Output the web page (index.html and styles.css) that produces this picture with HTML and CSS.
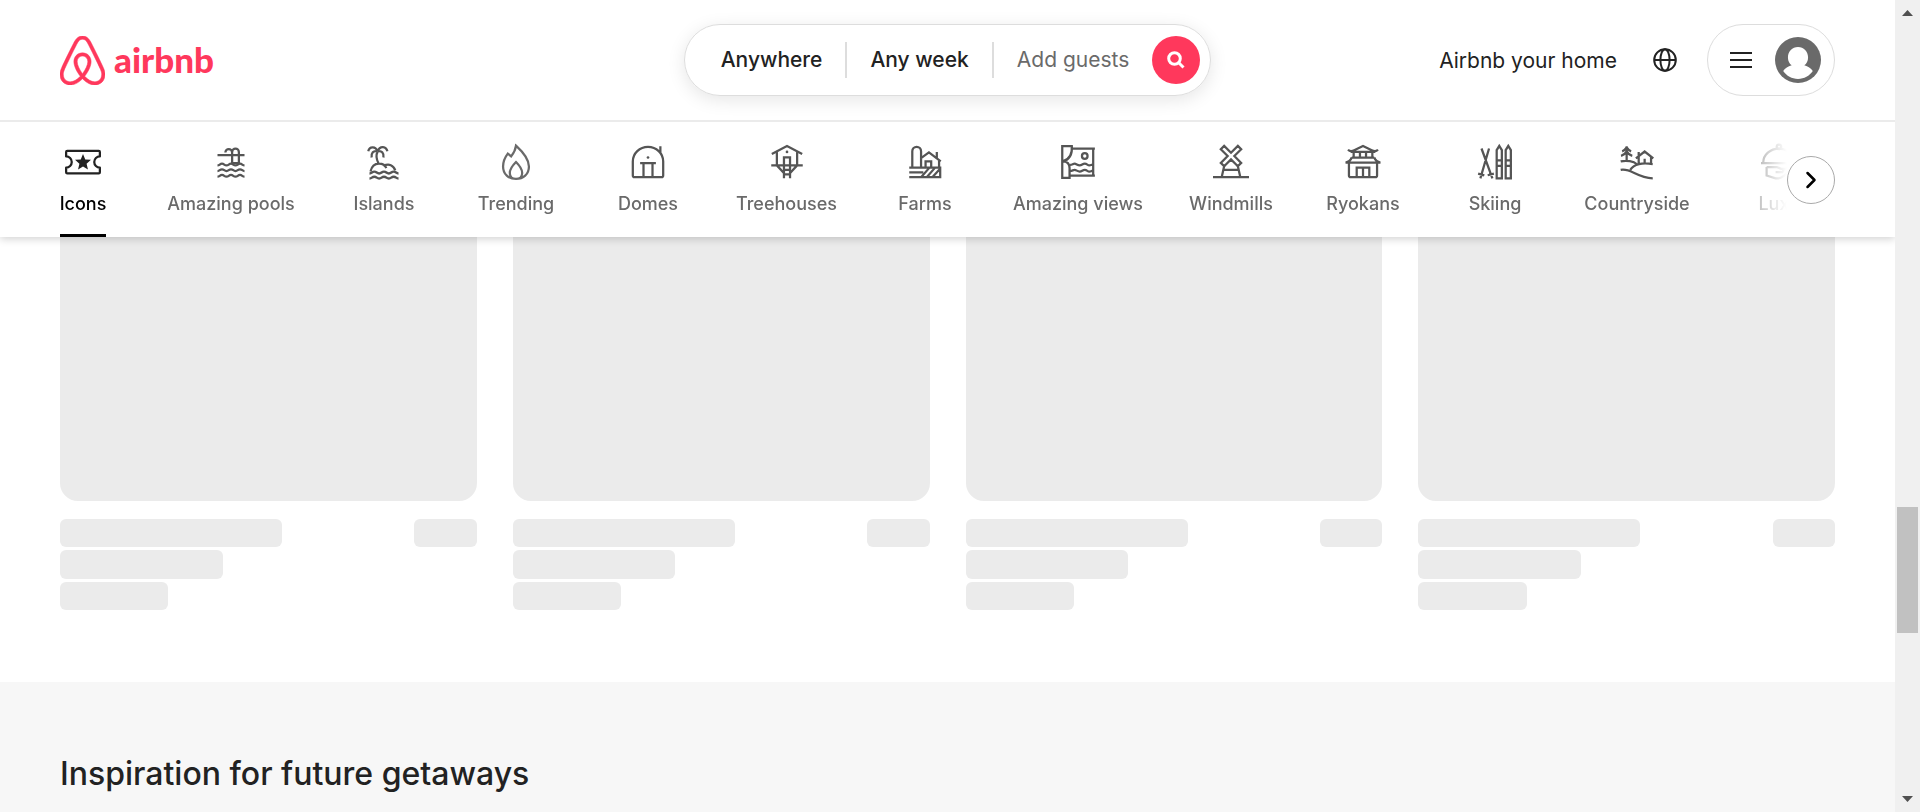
FILE: index.html
```html
<!DOCTYPE html>
<html lang="en">
<head>
<meta charset="utf-8">
<title>Airbnb</title>
<link rel="stylesheet" href="styles.css">
</head>
<body>
<svg class="defs" aria-hidden="true">
  <symbol id="wave" viewBox="0 0 24 4" overflow="visible"><path d="M0 2.5c2 0 2-1.5 4-1.5s2 1.5 4 1.5 2-1.5 4-1.5 2 1.5 4 1.5 2-1.5 4-1.5 2 1.5 4 1.5"/></symbol>
</svg>
<div class="window">
  <div class="page">
    <header class="site-header">
      <div class="topbar">
        <a class="logo" href="#" aria-label="Airbnb homepage">
          <svg class="logo-mark" viewBox="2.5 1 27 30" preserveAspectRatio="none" aria-hidden="true"><path d="M16 1c2.008 0 3.463.963 4.751 3.269l.533 1.025c1.954 3.83 6.114 12.54 7.1 14.836l.145.353c.667 1.591.91 2.472.96 3.396l.011.415.001.228c0 4.062-2.877 6.478-6.357 6.478-2.224 0-4.556-1.258-6.709-3.386l-.257-.26-.172-.179h-.011l-.176.185c-2.044 2.1-4.267 3.42-6.414 3.615l-.28.019-.267.006C5.377 31 2.5 28.584 2.5 24.522l.005-.469c.026-.928.23-1.768.83-3.244l.216-.524c.966-2.298 6.083-12.989 7.707-16.034C12.537 1.963 13.992 1 16 1zm0 2c-1.239 0-2.053.539-2.987 2.21l-.523 1.008c-1.926 3.776-6.06 12.43-7.031 14.692l-.345.836c-.427 1.071-.573 1.655-.605 2.24l-.009.33v.206C4.5 27.395 6.411 29 8.857 29c1.773 0 3.87-1.236 5.831-3.354-2.295-2.938-3.855-6.45-3.855-8.91 0-2.913 1.933-5.386 5.178-5.42 3.223.034 5.156 2.507 5.156 5.42 0 2.456-1.555 5.96-3.855 8.907C19.277 27.766 21.37 29 23.142 29c2.447 0 4.358-1.605 4.358-4.478l-.004-.411c-.019-.672-.17-1.296-.714-2.62l-.248-.6c-1.065-2.478-5.993-12.768-7.538-15.664C18.053 3.539 17.24 3 16 3zm.01 10.316c-2.01.021-3.177 1.514-3.177 3.42 0 1.797 1.18 4.58 2.955 7.044l.21.287.174-.234c1.73-2.385 2.898-5.066 2.989-6.875l.006-.221c0-1.906-1.167-3.4-3.156-3.421z"/></svg>
          <span class="logo-word">airbnb</span>
        </a>
        <div class="search">
          <button class="search-part">Anywhere</button>
          <button class="search-part divided">Any week</button>
          <button class="search-part divided guests">Add guests</button>
          <button class="search-go" aria-label="Search"><svg viewBox="0 0 18 18" aria-hidden="true"><circle cx="7.5" cy="7.5" r="5.8"/><path d="M11.8 11.8 16.5 16.5"/></svg></button>
        </div>
        <nav class="user-nav">
          <a class="host-link" href="#">Airbnb your home</a>
          <button class="globe" aria-label="Choose a language"><svg viewBox="0 0 24 24" aria-hidden="true"><circle cx="12" cy="12" r="10.8"/><ellipse cx="12" cy="12" rx="4.6" ry="10.8"/><path d="M1 12h22"/></svg></button>
          <button class="menu" aria-label="Main menu">
            <svg class="bars" viewBox="0 0 24 24" aria-hidden="true"><path d="M1 5h22M1 12h22M1 19h22"/></svg>
            <svg class="avatar" viewBox="0 0 32 32" aria-hidden="true"><circle cx="16" cy="16" r="16" fill="#6a6a6a"/><path fill="#fff" d="M16 7c4 0 7 3 7 7.200 0 2.400-1 4.300-2.600 5.500 2.600.7 4.500 2.100 5.900 4-2.400 3.400-6 5.500-10.300 5.500s-7.900-2.100-10.300-5.500c1.400-1.900 3.300-3.300 5.900-4C10 18.500 9 16.600 9 14.200 9 10 12 7 16 7z"/></svg>
          </button>
        </nav>
      </div>
      <div class="categories">
        <div class="category-list">
          <button class="category active"><svg viewBox="0 0 32 32"><path stroke-linejoin="round" d="M2 6h28q1 0 1 1v4a5 5 0 0 0 0 10v4q0 1-1 1H2q-1 0-1-1v-4a5 5 0 0 0 0-10V7q0-1 1-1z"/><path class="solid" d="m16 8.800 2 4.900 5.100.4-3.900 3.400 1.200 5.200-4.400-2.800-4.400 2.800 1.200-5.200-3.900-3.400 5.100-.4z"/></svg><span>Icons</span></button>
          <button class="category long"><svg viewBox="0 0 32 32"><path d="M4 9.800h24M11 7.500a3 3 0 0 1 6 0V18M17 7a3 3 0 0 1 6 0v11M17 17h6"/><use href="#wave" x="4" y="16.500" width="24" height="4"/><use href="#wave" x="4" y="21.500" width="24" height="4"/><use href="#wave" x="4" y="26.500" width="24" height="4"/></svg><span>Amazing pools</span></button>
          <button class="category"><svg viewBox="0 0 32 32"><path d="M10.200 7c-1.500 3-.8 7 1 10.500M10.200 6.500C8.500 1.500 3 2 2 6.500M10.200 6.500C6.500 5.500 4.500 8 5 12M10.200 6.500C12.500 1 18 2 19 6.500M10.200 6.500c3.800-1 5.800 1.500 5.300 5.500M4 24.500c1-4.500 3.500-7 7.500-7 3 0 5.500 1 6.500 4M15.500 19.500c5-2.500 9-.5 10.500 4"/><use href="#wave" x="3" y="23.500" width="26" height="4.300"/><use href="#wave" x="3" y="28" width="26" height="4.300"/></svg><span>Islands</span></button>
          <button class="category"><svg viewBox="0 0 32 32"><path class="light" d="M16 1.500C22 7 27.500 13 27.500 20S22.500 31 16 31 4.500 27 4.500 20c0-4 1.500-8 4.200-11.500l3 2.500C13.700 8.500 15.500 5.500 16 1.500zM16 16c-3 3-5.500 6-5.500 9.700C10.500 29 12.800 31 16 31s5.500-2 5.500-5.300c0-3.700-2.500-6.700-5.500-9.700z"/></svg><span>Trending</span></button>
          <button class="category"><svg viewBox="0 0 32 32"><path d="M2.500 15.500a13.500 13 0 0 1 27 0V28q0 1.500-1.500 1.500H4q-1.500 0-1.500-1.500zM27 2v6.500M9 17h14M12 17v12.500M20 17v12.500"/><circle class="solid" cx="16" cy="12" r="1.200"/></svg><span>Domes</span></button>
          <button class="category medium"><svg viewBox="0 0 32 32"><path d="M2.500 8.800 16 1.800l13.500 7M7 7v12M25 7v12M2 19h28M13.300 30.500V11.800h5.400v18.700M7 19l6 6.500M25 19l-6 6.500M13.300 23h5.400M13.300 27h5.400"/><circle class="solid" cx="16" cy="7" r="1.200"/></svg><span>Treehouses</span></button>
          <button class="category"><svg viewBox="0 0 32 32"><path d="M4.700 21V6.500a3.900 4 0 0 1 7.800 0V21M12.500 12.500 19.500 7.500l10.500 8M26.500 7v5.500M28.500 14.500V21M16.500 21v-5.500h5V21M2 21h27.500v8.500H2M2 25.200h12.500M12.500 29.500 20 21M17.500 29.500 25 21M22.500 29.500l6.500-7"/></svg><span>Farms</span></button>
          <button class="category long"><svg viewBox="0 0 32 32"><path d="M2 1.800h8.500C11 8 9.500 13.500 2.500 15.500c4 0 6 2.500 6 6v8.700H2zM10.500 4H31M29.500 4v24M8.500 28H31M9 18.500c2 0 2.500-1 4-1s2.500 1.500 4.500 1.500 2.500-1.500 4.500-1.500 2.500 1.500 4 1.500 2.500-1 3.500-1M9 24c2 0 2.500-1 4-1s2.500 1.500 4.500 1.500S20 23 22 23s2.500 1.500 4 1.500 2.500-1 3.500-1"/><circle cx="22" cy="10.700" r="2.500"/></svg><span>Amazing views</span></button>
          <button class="category"><svg viewBox="0 0 32 32"><path transform="rotate(45 16 10.700)" d="M13.900 0h4.200v8.600h8.600v4.200h-8.600v8.600h-4.200v-8.600H5.300V8.600h8.600z"/><path d="M0 29.500h32M7.700 29.500l2.500-11M24.300 29.500l-2.500-11M9.200 23h13.600"/></svg><span>Windmills</span></button>
          <button class="category"><svg viewBox="0 0 32 32"><path d="M2.700 5c1.500 1.800 3.500 1.500 5.500.5L16 1.800l7.800 3.700c2 1 4 1.300 5.500-.5M5 7h22M7.700 7v5M24.300 7v5M13.300 7v5M18.700 7v5M6 12h20M6 12c-1 2.500-2.500 4-5.500 4.500h31C28.500 16 27 14.500 26 12M3.500 17v11q0 1.500 1.500 1.500h22q1.500 0 1.500-1.500V17M10.400 29.500V21h11.200v8.500M16 21v8.500"/></svg><span>Ryokans</span></button>
          <button class="category"><svg viewBox="0 0 32 32"><path d="M4 4l9.700 26.500M10.700 4 3 30.500M1 26.300l5.500 1.600M9.500 27.800l5.500-1.500M17.500 30.500V5.500l2.300-3.800 2.300 3.800v25zM17.500 14.500h4.600M17.500 19.500h4.600M25.500 30.500V5.500l2.300-3.800 2.300 3.800v25zM25.500 14.500h4.600M25.500 19.500h4.600"/></svg><span>Skiing</span></button>
          <button class="category wide"><svg viewBox="0 0 32 32"><path d="M6.800 2v13M6.800 3c-1 1.500-2.500 3-4 3.500M6.800 3c1 1.500 2.500 3 4 3.500M6.800 6.500c-1 2-3 3.500-5 4M6.800 6.500c1 2 3 3.500 5 4M1.500 15.500C7 14 13 15.500 16 18M15 12.700l7.800-6 7.700 6M17.500 11V17M17.500 7v4M28.500 11.500V17M22.800 13v4.500M10 23c3-5 11-7 20-5M1.500 23c9-2 14 7 28.500 7.500"/></svg><span>Countryside</span></button>
          <button class="category"><svg viewBox="0 0 32 32"><path d="M2 16.500a14 12.500 0 0 1 28 0M0 17h32M5 20.500v7.500l8 2.500c3 .5 5-.5 7-2l6-4.500M5 20.500h9l4 1.500h6M13 25h6q2-1.500 0-3"/><circle cx="16" cy="2.500" r="2"/></svg><span>Luxe</span></button>
        </div>
        <button class="next" aria-label="Next categories"><svg viewBox="0 0 18 18" aria-hidden="true"><path d="m5.500 2 7 7-7 7"/></svg></button>
      </div>
    </header>
    <main class="listings">
      <div class="card"><div class="photo"></div><div class="row"><i class="bar title"></i><i class="bar rating"></i></div><i class="bar sub"></i><i class="bar price"></i></div>
      <div class="card"><div class="photo"></div><div class="row"><i class="bar title"></i><i class="bar rating"></i></div><i class="bar sub"></i><i class="bar price"></i></div>
      <div class="card"><div class="photo"></div><div class="row"><i class="bar title"></i><i class="bar rating"></i></div><i class="bar sub"></i><i class="bar price"></i></div>
      <div class="card"><div class="photo"></div><div class="row"><i class="bar title"></i><i class="bar rating"></i></div><i class="bar sub"></i><i class="bar price"></i></div>
    </main>
    <section class="inspiration"><h2>Inspiration for future getaways</h2></section>
  </div>
  <div class="scrollbar" aria-hidden="true">
    <svg class="arrow" viewBox="0 0 11 6"><path d="M5.500 0 11 6H0z"/></svg>
    <div class="track"><div class="thumb"></div></div>
    <svg class="arrow" viewBox="0 0 11 6"><path d="M0 0h11L5.500 6z"/></svg>
  </div>
</div>
</body>
</html>
```
FILE: styles.css
```css
* { box-sizing: border-box; }
body { margin: 0; background: #fff; color: #222; font-family: Inter, Roboto, sans-serif; }
button { border: 0; padding: 0; background: none; font: inherit; color: inherit; cursor: pointer; }
a { color: inherit; text-decoration: none; }
svg { display: block; flex: none; }
.defs { position: absolute; width: 0; height: 0; }
.window { display: grid; grid-template-columns: minmax(0, 1fr) 25px; height: 100vh; overflow: hidden; }
.page { display: flex; flex-direction: column; overflow: hidden; }

.site-header { position: relative; z-index: 1; flex: none; background: #fff; box-shadow: 0 2px 8px rgba(0, 0, 0, .18); }
.topbar { display: grid; grid-template-columns: 1fr auto 1fr; align-items: center; height: 122px; padding: 0 60px; border-bottom: 2px solid #ebebeb; }
.logo { display: flex; align-items: center; gap: 9px; color: #ff385c; justify-self: start; }
.logo-mark { width: 45px; height: 49px; fill: currentColor; stroke: currentColor; stroke-width: .3; }
.logo-word { padding-bottom: 3px; font: 900 35px/48px Lato, sans-serif; }
.search { display: flex; align-items: center; height: 72px; padding: 0 10px 0 13px; border: 1px solid #ddd; border-radius: 36px; box-shadow: 0 4px 18px rgba(0, 0, 0, .1); font-size: 21px; line-height: 36px; font-weight: 500; }
.search-part { padding: 0 23px; }
.search-part.divided { border-left: 2px solid #ddd; }
.search-part.guests { color: #6a6a6a; font-weight: 400; }
.search-go { display: grid; place-items: center; width: 48px; height: 48px; border-radius: 50%; background: #ff385c; }
.search-go svg { width: 18px; height: 18px; fill: none; stroke: #fff; stroke-width: 3; }
.user-nav { display: flex; align-items: center; justify-self: end; font-size: 21px; }
.host-link { margin-right: 36px; }
.globe { margin-right: 30px; }
.globe svg { width: 24px; height: 24px; fill: none; stroke: #222; stroke-width: 2; }
.menu { display: flex; align-items: center; gap: 22px; height: 72px; padding: 0 13px 0 21px; border: 1px solid #ddd; border-radius: 36px; }
.bars { width: 24px; height: 24px; fill: none; stroke: #222; stroke-width: 2; }
.avatar { width: 46px; height: 46px; }

.categories { position: relative; display: flex; align-items: center; padding: 0 60px; }
.category-list { display: flex; flex: 1; gap: 48px; overflow: hidden; mask-image: linear-gradient(to right, #000 calc(100% - 72px), transparent); }
.category { display: flex; flex: none; flex-direction: column; align-items: center; gap: 12px; width: 84px; padding: 22px 0 18px; border-bottom: 3px solid transparent; color: #6a6a6a; font-size: 18px; line-height: 24px; font-weight: 500; white-space: nowrap; }
.category.active { width: 46px; margin-right: 14px; border-bottom-color: #000; color: #000; }
.category.long { width: 126px; }
.category.medium { width: 97px; }
.category.wide { width: 104px; }
.category svg { width: 36px; height: 36px; fill: none; stroke: #555; stroke-width: 2; overflow: visible; }
.category .light { stroke: #6a6a6a; }
.category .solid { fill: #555; stroke: none; }
.category.active svg { stroke: #222; }
.category.active .solid { fill: #222; }
.next { display: grid; flex: none; place-items: center; width: 48px; height: 48px; border: 1px solid #aaa; border-radius: 50%; background: #fff; }
.next svg { width: 18px; height: 18px; fill: none; stroke: #000; stroke-width: 2.5; stroke-linecap: round; stroke-linejoin: round; }

.listings { display: grid; flex: none; grid-template-columns: repeat(4, minmax(0, 1fr)); gap: 36px; padding: 0 60px 72px; }
.card { display: flex; flex-direction: column; gap: 3px; }
.photo { height: 264px; margin-bottom: 15px; border-radius: 0 0 18px 18px; background: #ebebeb; }
.row { display: flex; justify-content: space-between; }
.bar { height: 28px; border-radius: 6px; background: #ebebeb; }
.title { width: 53.3%; }
.rating { width: 15%; }
.sub { width: 39%; height: 29px; }
.price { width: 26%; }
.inspiration { flex: 1 0 auto; padding: 72px 60px; background: #f7f7f7; }
.inspiration h2 { margin: 0; font-size: 32px; line-height: 39px; font-weight: 500; }

.scrollbar { display: flex; flex-direction: column; align-items: center; padding: 10px 2px; background: #f0f0f0; }
.arrow { width: 11px; height: 6px; fill: #505050; }
.track { display: flex; flex: 1; flex-direction: column; align-self: stretch; }
.track::before { content: ""; flex: 491; }
.track::after { content: ""; flex: 163; }
.thumb { flex: 126; background: #c1c1c1; }
```
